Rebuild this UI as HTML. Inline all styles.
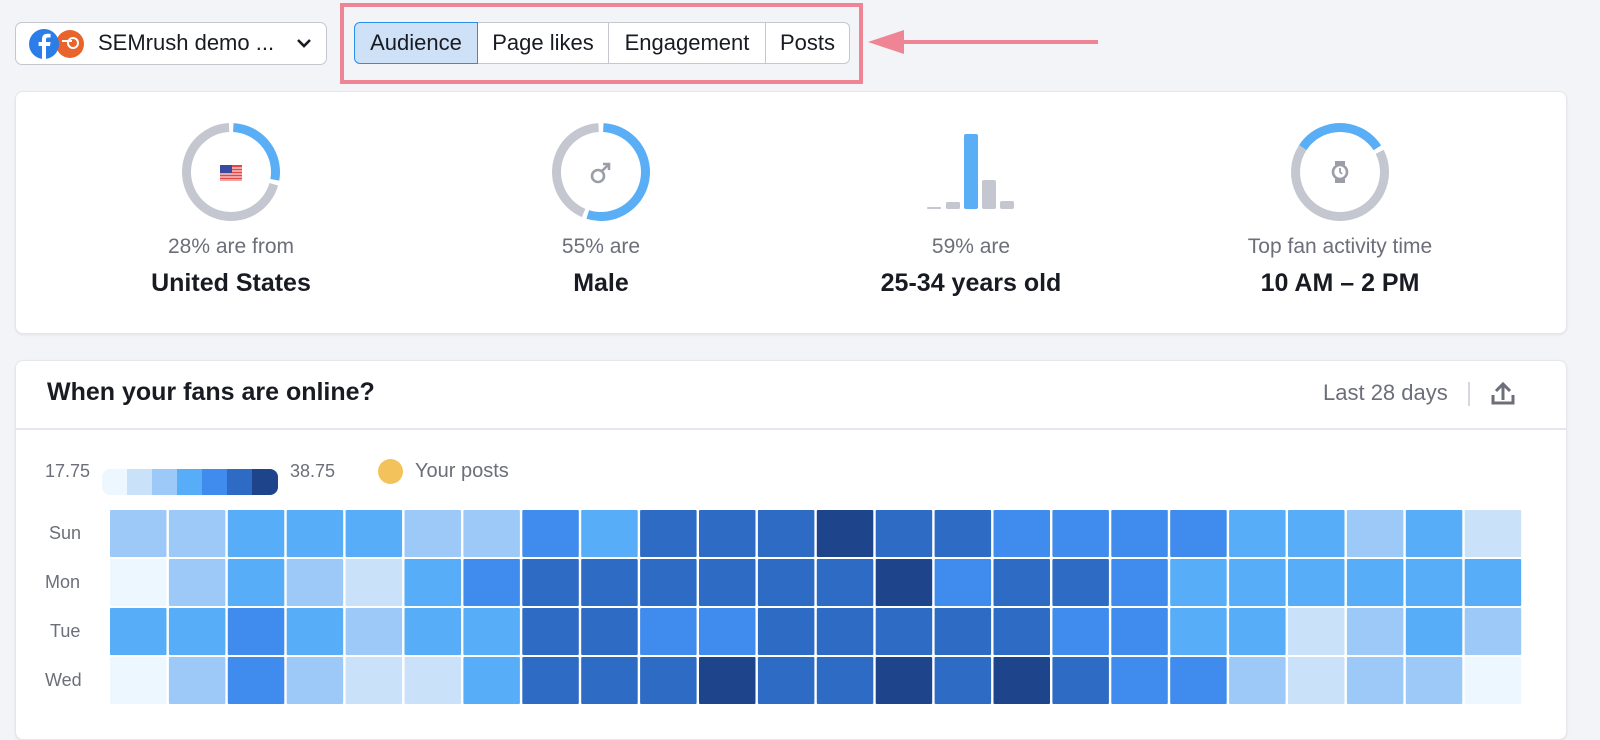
<!DOCTYPE html>
<html><head><meta charset="utf-8"><style>
*{margin:0;padding:0;box-sizing:border-box}
body{width:1600px;height:714px;background:#f3f4f8;font-family:"Liberation Sans",sans-serif;position:relative;overflow:hidden;color:#191b23}
.abs{position:absolute}
.card{position:absolute;background:#fff;border-radius:8px;box-shadow:0 1px 2px rgba(0,0,0,.08);border:1px solid #e6e7ec}
.lbl{position:absolute;width:300px;text-align:center;font-size:21px;color:#6c6e79}
.big{position:absolute;width:300px;text-align:center;font-size:25px;font-weight:bold;color:#191b23}
.btn{position:absolute;top:22px;height:42px;border:1px solid #c4c7cf;background:#fff;font-size:22px;line-height:40px;text-align:center;color:#191b23;white-space:nowrap}
</style></head><body>
<div class="abs" style="left:15px;top:22px;width:312px;height:43px;background:#fff;border:1px solid #c4c7cf;border-radius:7px"></div>
<svg class="abs" style="left:20px;top:22px" width="80" height="44">
<circle cx="50" cy="22" r="14" fill="#e8642c"/>
<path d="M42 19 h10" stroke="#fff" stroke-width="2"/><circle cx="53" cy="21" r="5" fill="none" stroke="#fff" stroke-width="2"/>
<circle cx="24" cy="22" r="15" fill="#2b7de9"/>
<path d="M26 37 V24 h4 l.6-4 H26 v-2.5 c0-1.2.5-2 2-2 h2.6 v-3.6 c-.6-.1-2-.2-3.4-.2 c-3.2 0-5.2 1.9-5.2 5.4 V20 h-3.4 v4 h3.4 v13z" fill="#fff"/>
</svg>
<div class="abs" style="left:98px;top:30px;font-size:22px;color:#191b23">SEMrush demo ...</div>
<svg class="abs" style="left:296px;top:38px" width="16" height="12"><path d="M2 2 L8 8 L14 2" fill="none" stroke="#191b23" stroke-width="2.6"/></svg>

<div class="abs" style="left:340px;top:3px;width:523px;height:81px;border:4px solid #ef8494"></div>
<div class="btn" style="left:354px;width:124px;border-radius:6px 0 0 6px;background:#cfe1f7;border-color:#2b8fe8;z-index:2">Audience</div>
<div class="btn" style="left:477px;width:132px">Page likes</div>
<div class="btn" style="left:608px;width:158px">Engagement</div>
<div class="btn" style="left:765px;width:85px;border-radius:0 6px 6px 0">Posts</div>
<svg class="abs" style="left:866px;top:28px" width="236" height="30"><path d="M30 14 H232" stroke="#ef8494" stroke-width="4"/><path d="M2 14 L38 2 L38 26 Z" fill="#ef8494"/></svg>

<div class="card" style="left:15px;top:91px;width:1552px;height:243px"></div>
<svg class="abs" style="left:0;top:91px" width="1600" height="140">
<g fill="none" stroke-width="9">
<circle cx="231" cy="81" r="44.5" stroke="#59aef6" stroke-dasharray="75.4 400" transform="rotate(-87 231 81)"/>
<circle cx="231" cy="81" r="44.5" stroke="#c4c7cf" stroke-dasharray="195 400" transform="rotate(16 231 81)"/>
<circle cx="601" cy="81" r="44.5" stroke="#59aef6" stroke-dasharray="150.7 400" transform="rotate(-87 601 81)"/>
<circle cx="601" cy="81" r="44.5" stroke="#c4c7cf" stroke-dasharray="119.3 400" transform="rotate(113 601 81)"/>
<circle cx="1340" cy="81" r="44.5" stroke="#59aef6" stroke-dasharray="88.5 400" transform="rotate(-147 1340 81)"/>
<circle cx="1340" cy="81" r="44.5" stroke="#c4c7cf" stroke-dasharray="186.4 400" transform="rotate(-27 1340 81)"/>
</g>
<rect x="220" y="74" width="22" height="16" fill="#e04848"/>
<g stroke="#fff" stroke-width="1"><path d="M220 77h22M220 80h22M220 83h22M220 86h22M220 89h22"/></g>
<rect x="220" y="74" width="12" height="8" fill="#3a4aa0"/>
<circle cx="598" cy="85" r="6" fill="none" stroke="#9b9ea8" stroke-width="2.6"/>
<path d="M602 80 L609 73 M603 73 H609 V79" fill="none" stroke="#9b9ea8" stroke-width="2.6"/>
<rect x="927" y="116" width="14" height="2" rx="1" fill="#c4c7cf"/>
<rect x="946" y="111" width="14" height="7" rx="1.5" fill="#c4c7cf"/>
<rect x="964" y="43" width="14" height="75" rx="2" fill="#59aef6"/>
<rect x="982" y="89" width="14" height="29" rx="2" fill="#c4c7cf"/>
<rect x="1000" y="110" width="14" height="8" rx="2" fill="#c4c7cf"/>
<rect x="1335" y="70" width="10" height="4" fill="#9b9ea8"/><rect x="1335" y="88" width="10" height="4" fill="#9b9ea8"/>
<circle cx="1340" cy="81" r="7" fill="none" stroke="#9b9ea8" stroke-width="2.6"/>
<path d="M1340 77 V81 L1342 83" fill="none" stroke="#9b9ea8" stroke-width="1.8"/>
</svg>
<div class="lbl" style="left:81px;top:235px">28% are from</div>
<div class="big" style="left:81px;top:269px">United States</div>
<div class="lbl" style="left:451px;top:235px">55% are</div>
<div class="big" style="left:451px;top:269px">Male</div>
<div class="lbl" style="left:821px;top:235px">59% are</div>
<div class="big" style="left:821px;top:269px">25-34 years old</div>
<div class="lbl" style="left:1190px;top:235px">Top fan activity time</div>
<div class="big" style="left:1190px;top:269px">10 AM – 2 PM</div>

<div class="card" style="left:15px;top:360px;width:1552px;height:380px"></div>
<div class="abs" style="left:16px;top:428px;width:1550px;height:2px;background:#e6e7ec"></div>
<div class="abs" style="left:47px;top:378px;font-size:25px;font-weight:bold">When your fans are online?</div>
<div class="abs" style="left:1323px;top:380px;font-size:22px;color:#6c6e79">Last 28 days</div>
<div class="abs" style="left:1468px;top:382px;width:2px;height:24px;background:#d6d8de"></div>
<svg class="abs" style="left:1490px;top:381px" width="28" height="26"><path d="M13 19 V4 M6 10 L13 3 L20 10" fill="none" stroke="#6c6e79" stroke-width="3"/><path d="M3 14 V22 H23 V14" fill="none" stroke="#6c6e79" stroke-width="3"/></svg>
<div class="abs" style="left:45px;top:461px;font-size:18px;color:#6c6e79">17.75</div>
<svg class="abs" style="left:102px;top:469px" width="176" height="26"><defs><clipPath id="c"><rect width="176" height="26" rx="8"/></clipPath></defs><g clip-path="url(#c)">
<rect x="0" width="25" height="26" fill="#edf7ff"/><rect x="25" width="25" height="26" fill="#c9e2fa"/><rect x="50" width="25" height="26" fill="#9dc9f9"/><rect x="75" width="25" height="26" fill="#57adf7"/><rect x="100" width="25" height="26" fill="#3f8cee"/><rect x="125" width="25" height="26" fill="#2d6bc4"/><rect x="150" width="26" height="26" fill="#1e448c"/></g></svg>
<div class="abs" style="left:290px;top:461px;font-size:18px;color:#6c6e79">38.75</div>
<div class="abs" style="left:378px;top:459px;width:25px;height:25px;border-radius:50%;background:#f3c25a"></div>
<div class="abs" style="left:415px;top:460px;font-size:20px;color:#6c6e79">Your posts</div>
<div class="abs" style="left:49px;top:523px;font-size:18px;color:#6c6e79">Sun</div>
<div class="abs" style="left:45px;top:572px;font-size:18px;color:#6c6e79">Mon</div>
<div class="abs" style="left:50px;top:621px;font-size:18px;color:#6c6e79">Tue</div>
<div class="abs" style="left:45px;top:670px;font-size:18px;color:#6c6e79">Wed</div>
<svg id="hm" class="abs" style="left:0;top:0" width="1600" height="714"></svg>
<script>
var C={A:"#edf7ff",B:"#c9e2fa",C:"#9dc9f9",D:"#57adf7",E:"#3f8cee",F:"#2d6bc4",G:"#1e448c"};
var R=["CCDDDCCEDFFFGFFEEEEDDCDB","ACDCBDEFFFFFFGEFFEDDDDDD","DDEDCDDFFEEFFFFFEEDDBCDC","ACECBBDFFFGFFGFGFEECBCCA"];
var s="";for(var r=0;r<4;r++)for(var i=0;i<24;i++){s+='<rect x="'+(110+i*58.9).toFixed(1)+'" y="'+(510+r*49)+'" width="56.5" height="47" rx="1" fill="'+C[R[r][i]]+'"/>';}
document.getElementById("hm").innerHTML=s;
</script>
</body></html>
